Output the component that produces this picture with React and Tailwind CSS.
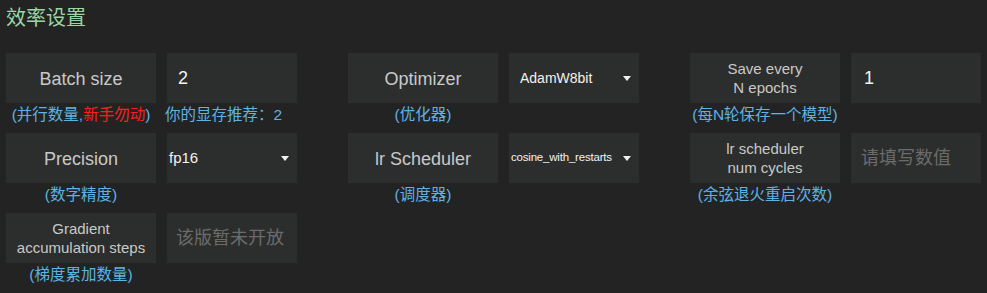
import React from 'react';

const font = { fontFamily: '"Liberation Sans", "Noto Sans CJK SC", sans-serif' };

function Caret() {
    return (
        <svg width="8" height="5" viewBox="0 0 8 5" className="shrink-0">
            <path d="M0 0 H8 L4 5 Z" fill="#f2f2f2" />
        </svg>
    );
}

function Label({ children, note }) {
    return (
        <div className="w-[150px] flex flex-col items-center">
            <div className="w-[150px] h-[50px] bg-[#2c2e2d] flex items-center justify-center text-center text-[#c9c9c9]">
                {children}
            </div>
            <div className="h-[30px] leading-[24px] text-[15.5px] text-[#5cb3e6] whitespace-nowrap">{note}</div>
        </div>
    );
}

function Field({ children, note, className = '' }) {
    return (
        <div className="w-[130px] flex flex-col">
            <div className={`w-[130px] h-[50px] bg-[#2c2e2d] flex items-center ${className}`}>
                {children}
            </div>
            <div className="h-[30px] leading-[24px] text-[15.5px] text-[#5cb3e6] whitespace-nowrap -ml-[2px]">{note}</div>
        </div>
    );
}

function Select({ value, size, pad }) {
    return (
        <Field className={`${pad} pr-[8px] justify-between text-[#f2f2f2] ${size}`}>
            <span className="whitespace-nowrap">{value}</span>
            <Caret />
        </Field>
    );
}

function Group({ children }) {
    return <div className="flex gap-[11px] w-[291px] shrink-0">{children}</div>;
}

const big = 'text-[18px] pt-[3px]';
const two = 'text-[15px] leading-[19px]';

export default function App() {
    return (
        <div className="w-[987px] h-[293px] bg-[#232323] overflow-hidden pl-[6px]" style={font}>
            <h2 className="pt-[4px] h-[53px] text-[20px] leading-[28px] text-[#9bd6a5]">效率设置</h2>

            <div className="flex gap-[51px]">
                <Group>
                    <Label note={<>(并行数量,<span className="text-[#ff1e1e]">新手勿动</span>)</>}>
                        <span className={big}>Batch size</span>
                    </Label>
                    <Field note="你的显存推荐：2" className="pl-[11px] text-[18px] text-[#f2f2f2]">2</Field>
                </Group>
                <Group>
                    <Label note="(优化器)"><span className={big}>Optimizer</span></Label>
                    <Select value="AdamW8bit" size="text-[14px]" pad="pl-[11px]" />
                </Group>
                <Group>
                    <Label note="(每N轮保存一个模型)">
                        <span className={two}>Save every<br />N epochs</span>
                    </Label>
                    <Field className="pl-[13px] text-[18px] text-[#f2f2f2]">1</Field>
                </Group>
            </div>

            <div className="flex gap-[51px]">
                <Group>
                    <Label note="(数字精度)"><span className={big}>Precision</span></Label>
                    <Select value="fp16" size="text-[15px]" pad="pl-[2px]" />
                </Group>
                <Group>
                    <Label note="(调度器)"><span className={big}>lr Scheduler</span></Label>
                    <Select value="cosine_with_restarts" size="text-[11.5px] tracking-[-0.2px]" pad="pl-[2px]" />
                </Group>
                <Group>
                    <Label note="(余弦退火重启次数)">
                        <span className={two}>lr scheduler<br />num cycles</span>
                    </Label>
                    <Field className="pl-[10px] text-[18px] text-[#6b6b6b]">请填写数值</Field>
                </Group>
            </div>

            <div className="flex gap-[51px]">
                <Group>
                    <Label note="(梯度累加数量)">
                        <span className={two}>Gradient<br />accumulation steps</span>
                    </Label>
                    <Field className="pl-[9px] text-[18px] text-[#6b6b6b]">该版暂未开放</Field>
                </Group>
            </div>
        </div>
    );
}
